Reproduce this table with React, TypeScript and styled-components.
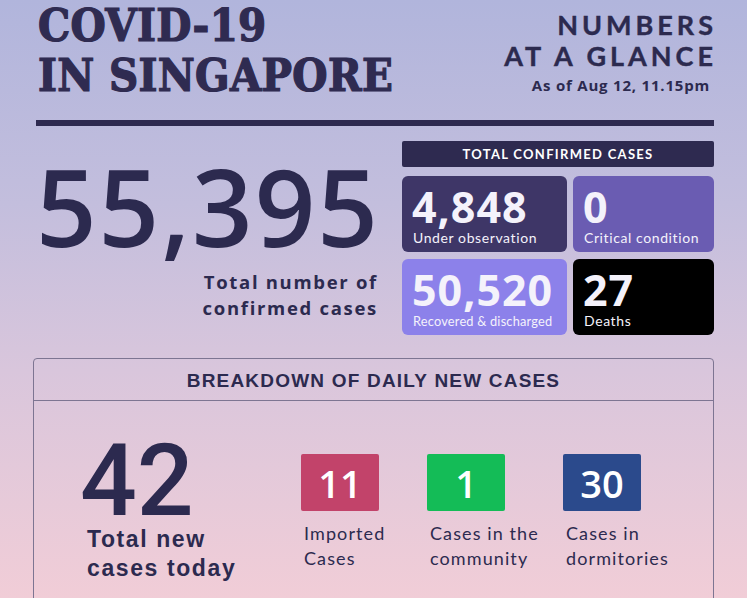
import React from 'react'
import styled, { createGlobalStyle } from 'styled-components'

const GlobalStyle = createGlobalStyle`
  html, body {
    margin: 0;
    padding: 0;
  }
  body {
    background: #f0cdd8;
  }
`

const ink = '#2c2a4f'

const Page = styled.div`
  width: 747px;
  height: 598px;
  overflow: hidden;
  box-sizing: border-box;
  padding: 0 33px 0 36px;
  background: linear-gradient(180deg, #b1b5dc 0%, #c3bedd 34%, #d9c6dc 62%, #f1cdd7 100%);
  color: ${ink};
  font-family: 'Lato', 'Open Sans', sans-serif;
`

const Header = styled.header`
  display: flex;
  justify-content: space-between;
  align-items: flex-start;
  padding-top: 1px;
`

const Title = styled.h1`
  margin: 0 0 0 2px;
  font-family: 'DejaVu Serif', 'Liberation Serif', serif;
  font-stretch: condensed;
  font-weight: 900;
  font-size: 45px;
  line-height: 50px;
  letter-spacing: 0.3px;
  color: #2f2b51;
  -webkit-text-stroke: 1.2px #2f2b51;
`

const Glance = styled.div`
  display: flex;
  flex-direction: column;
  align-items: flex-end;
  padding-top: 8px;
`

const GlanceTitle = styled.h2`
  margin: 0 -3px 0 0;
  text-align: right;
  font-size: 27px;
  line-height: 31px;
  font-weight: 700;
  letter-spacing: 4px;
  -webkit-text-stroke: 0.4px ${ink};
`

const AsOf = styled.div`
  margin: 4px 4px 0 0;
  font-family: 'Open Sans', sans-serif;
  font-size: 15px;
  font-weight: 700;
  letter-spacing: 0.8px;
`

const Rule = styled.hr`
  margin: 19px 0 0;
  height: 6px;
  border: 0;
  background: #2e2a50;
`

const Summary = styled.section`
  display: flex;
  justify-content: space-between;
  margin-top: 15px;
`

const TotalBlock = styled.div`
  display: flex;
  flex-direction: column;
  width: 342px;
`

const BigNumber = styled.div`
  margin-top: 12px;
  font-family: 'Open Sans', sans-serif;
  font-weight: 600;
  font-size: 106px;
  line-height: 106px;
  letter-spacing: 2px;
`

const TotalLabel = styled.div`
  margin-top: 10px;
  align-self: flex-end;
  text-align: right;
  font-family: 'Open Sans', sans-serif;
  font-size: 18.5px;
  line-height: 26px;
  font-weight: 700;
  letter-spacing: 1.7px;
`

const Stats = styled.div`
  width: 312px;
  display: flex;
  flex-direction: column;
  gap: 9px;
`

const StatsBar = styled.div`
  height: 26px;
  display: flex;
  align-items: center;
  justify-content: center;
  background: #2e2a50;
  border-radius: 2px;
  color: #fff;
  font-size: 13px;
  font-weight: 700;
  letter-spacing: 1.3px;
`

const StatGrid = styled.div`
  display: grid;
  grid-template-columns: 165px 141px;
  grid-auto-rows: 76px;
  gap: 7px 6px;
`

const StatCard = styled.div<{ $bg: string }>`
  box-sizing: border-box;
  display: flex;
  flex-direction: column;
  padding: 11px 10px 0;
  border-radius: 6px;
  background: ${p => p.$bg};
  color: #f4f2fb;
`

const StatValue = styled.div`
  font-family: 'Open Sans', sans-serif;
  font-weight: 700;
  font-size: 43px;
  line-height: 40px;
  letter-spacing: 1px;
`

const StatLabel = styled.div<{ $small?: boolean }>`
  margin-top: 3px;
  white-space: nowrap;
  font-size: ${p => (p.$small ? '12.8px' : '14px')};
  line-height: 16px;
  letter-spacing: ${p => (p.$small ? '0.2px' : '0.6px')};
  padding-left: 1px;
`

const Breakdown = styled.section`
  margin: 23px 0 0 -3px;
  height: 260px;
  border: 1px solid #7d7592;
  border-radius: 4px;
`

const BreakdownHead = styled.h3`
  margin: 0;
  height: 42px;
  display: flex;
  align-items: center;
  justify-content: center;
  border-bottom: 1px solid #7d7592;
  font-family: 'Liberation Sans', Arial, sans-serif;
  font-size: 19px;
  font-weight: 700;
  letter-spacing: 1.2px;
  padding-top: 2px;
  box-sizing: border-box;
`

const BreakdownBody = styled.div`
  display: flex;
  align-items: flex-start;
  padding: 32px 0 0 46px;
`

const NewTotal = styled.div`
  width: 221px;
  display: flex;
  flex-direction: column;
`

const NewNumber = styled.div`
  font-family: 'Roboto', sans-serif;
  font-weight: 500;
  font-size: 100px;
  line-height: 96px;
  letter-spacing: 0px;
`

const NewLabel = styled.div`
  margin: -4px 0 0 7px;
  font-family: 'Liberation Sans', Arial, sans-serif;
  font-size: 23px;
  line-height: 29px;
  font-weight: 700;
  letter-spacing: 1.6px;
`

const Sources = styled.div`
  display: grid;
  grid-template-columns: 126px 136px auto;
  margin-top: 21px;
`

const Source = styled.div`
  display: flex;
  flex-direction: column;
`

const SourceBox = styled.div<{ $bg: string }>`
  width: 78px;
  height: 57px;
  display: flex;
  align-items: center;
  justify-content: center;
  border-radius: 2px;
  background: ${p => p.$bg};
  color: #fff;
  font-family: 'Open Sans', sans-serif;
  font-weight: 600;
  font-size: 38px;
`

const SourceLabel = styled.div`
  margin-top: 10px;
  padding-left: 3px;
  font-size: 18px;
  line-height: 25px;
  letter-spacing: 1.1px;
`

const stats = [
  { value: '4,848', label: 'Under observation', bg: '#3e3667' },
  { value: '0', label: 'Critical condition', bg: '#6a5cb2' },
  { value: '50,520', label: 'Recovered & discharged', bg: '#8c81ea', small: true },
  { value: '27', label: 'Deaths', bg: '#000000' },
]

const sources = [
  { value: '11', label: ['Imported', 'Cases'], bg: '#c2436a' },
  { value: '1', label: ['Cases in the', 'community'], bg: '#14bc57' },
  { value: '30', label: ['Cases in', 'dormitories'], bg: '#2b4a8c' },
]

export default function App() {
  return (
    <>
      <GlobalStyle />
      <Page>
        <Header>
          <Title>
            COVID-19
            <br />
            IN SINGAPORE
          </Title>
          <Glance>
            <GlanceTitle>
              NUMBERS
              <br />
              AT A GLANCE
            </GlanceTitle>
            <AsOf>As of Aug 12, 11.15pm</AsOf>
          </Glance>
        </Header>
        <Rule />
        <Summary>
          <TotalBlock>
            <BigNumber>55,395</BigNumber>
            <TotalLabel>
              Total number of
              <br />
              confirmed cases
            </TotalLabel>
          </TotalBlock>
          <Stats>
            <StatsBar>TOTAL CONFIRMED CASES</StatsBar>
            <StatGrid>
              {stats.map(s => (
                <StatCard key={s.label} $bg={s.bg}>
                  <StatValue>{s.value}</StatValue>
                  <StatLabel $small={s.small}>{s.label}</StatLabel>
                </StatCard>
              ))}
            </StatGrid>
          </Stats>
        </Summary>
        <Breakdown>
          <BreakdownHead>BREAKDOWN OF DAILY NEW CASES</BreakdownHead>
          <BreakdownBody>
            <NewTotal>
              <NewNumber>42</NewNumber>
              <NewLabel>
                Total new
                <br />
                cases today
              </NewLabel>
            </NewTotal>
            <Sources>
              {sources.map(s => (
                <Source key={s.value}>
                  <SourceBox $bg={s.bg}>{s.value}</SourceBox>
                  <SourceLabel>
                    {s.label[0]}
                    <br />
                    {s.label[1]}
                  </SourceLabel>
                </Source>
              ))}
            </Sources>
          </BreakdownBody>
        </Breakdown>
      </Page>
    </>
  )
}
